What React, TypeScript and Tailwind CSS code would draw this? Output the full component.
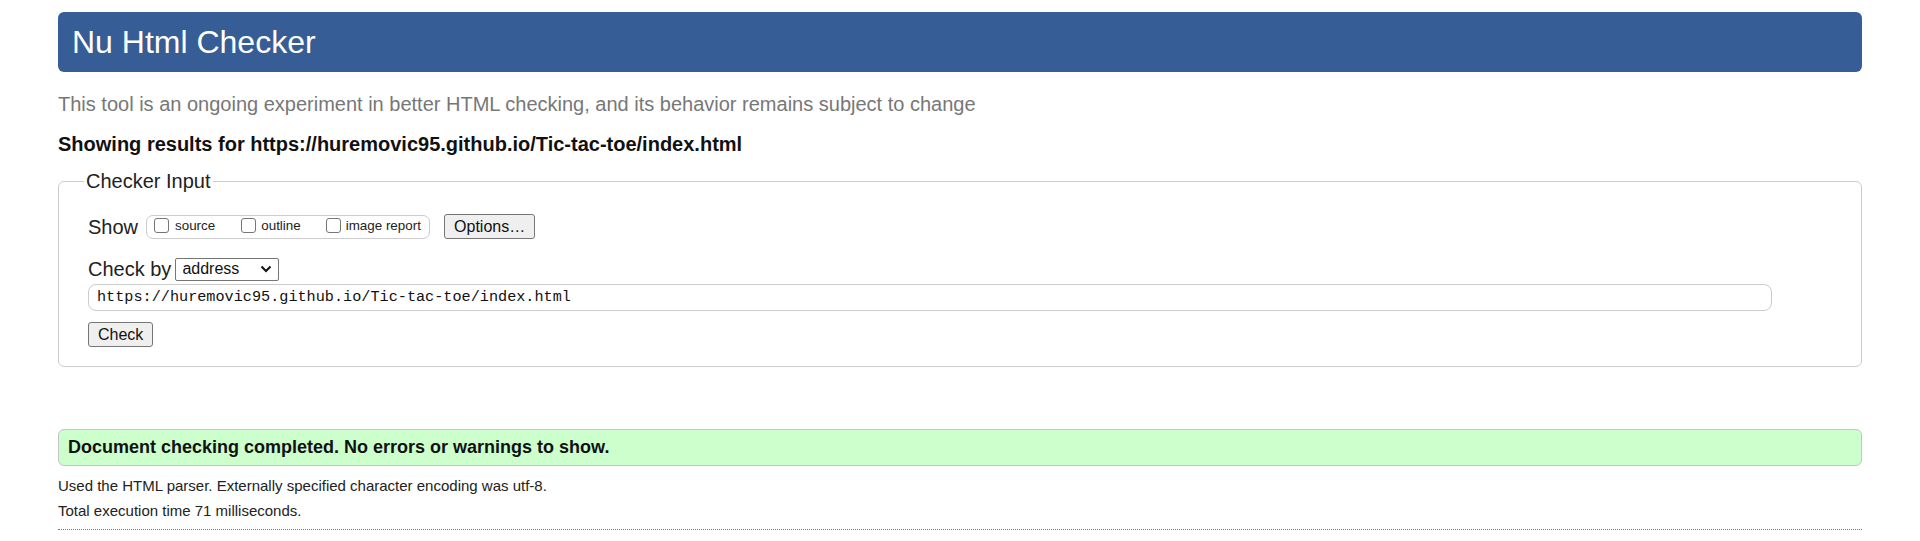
const Checkbox = () => (
  <span className="inline-block h-[15px] w-[15px] shrink-0 self-start mt-[2px] rounded-[3px] border border-[#767676] bg-white" />
);

export default function App() {
  return (
    <div className="min-h-[541px] bg-white px-[58px] pt-[12px] font-['Liberation_Sans',Arial,sans-serif] text-[#111]">
      <h1 className="h-[60px] rounded-[6px] bg-[#365d95] pl-[14px] text-[32px] leading-[60px] text-white">
        Nu Html Checker
      </h1>

      <p className="mt-[20px] text-[20px] leading-[24px] text-[#777]">
        This tool is an ongoing experiment in better HTML checking, and its behavior remains subject to change
      </p>
      <p className="mt-[16px] text-[20px] font-bold leading-[24px] text-[#111]">
        Showing results for https://huremovic95.github.io/Tic-tac-toe/index.html
      </p>

      <fieldset className="mt-[13px] rounded-[6px] border border-[#ccc] pb-[19px] pl-[29px] pr-[89px]">
        <legend className="-ml-[4px] px-[2px] text-[20px] leading-[24px] text-[#222]">Checker Input</legend>

        {/* show options */}
        <div className="mt-[21px] flex h-[25px] items-center">
          <span className="text-[20px] leading-[24px] text-[#222]">Show</span>
          <div className="ml-[8px] flex h-[24px] w-[284px] items-center rounded-[7px] border border-[#ccc] pl-[7px] text-[13.4px] text-[#222]">
            <label className="flex items-center">
              <Checkbox />
              <span className="ml-[6px]">source</span>
            </label>
            <label className="ml-[26px] flex items-center">
              <Checkbox />
              <span className="ml-[5px]">outline</span>
            </label>
            <label className="ml-[25px] flex items-center">
              <Checkbox />
              <span className="ml-[5px]">image report</span>
            </label>
          </div>
          <button className="ml-[14px] h-[25px] rounded-[3px] border border-[#767676] bg-[#efefef] px-[9px] text-[16px] text-[#111]">
            Options…
          </button>
        </div>

        {/* check by */}
        <div className="mt-[19px] flex h-[22px] items-center">
          <span className="text-[20px] leading-[24px] text-[#222]">Check by</span>
          <div className="ml-[4px] flex h-[23px] w-[104px] items-center justify-between rounded-[2px] border border-[#767676] bg-white pl-[6px] pr-[6px] text-[16px] text-[#111]">
            <span>address</span>
            <svg width="12" height="8" viewBox="0 0 12 8">
              <polyline points="1.5,1.5 6,6 10.5,1.5" fill="none" stroke="#111" strokeWidth="2" />
            </svg>
          </div>
        </div>

        <div className="mt-[4px] flex h-[27px] items-center rounded-[8px] border border-[#ccc] bg-white pl-[8px] font-['Liberation_Mono',monospace] text-[15.2px] text-[#111]">
          https://huremovic95.github.io/Tic-tac-toe/index.html
        </div>

        <button className="mt-[11px] h-[25px] rounded-[3px] border border-[#767676] bg-[#efefef] px-[9px] text-[16px] text-[#111]">
          Check
        </button>
      </fieldset>

      <div className="mt-[62px] flex h-[37px] items-center rounded-[6px] border border-[#c4c4c4] bg-[#ccffcc] pl-[9px] text-[18px] font-bold text-[#111]">
        Document checking completed. No errors or warnings to show.
      </div>

      <p className="mt-[7px] text-[15px] leading-[25px] text-[#222]">
        Used the HTML parser. Externally specified character encoding was utf-8.
      </p>
      <p className="text-[15px] leading-[25px] text-[#222]">Total execution time 71 milliseconds.</p>
      <div className="mt-[6px] border-t border-dotted border-[#777]" />
    </div>
  );
}
